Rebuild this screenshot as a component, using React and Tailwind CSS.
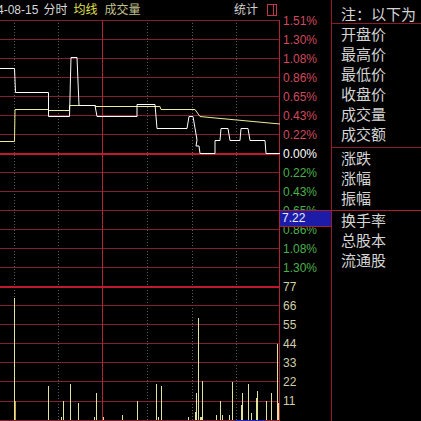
import React from "react";

// grid rows: 21 rows of 19.05px under a 20px header
const ROW = 19.05;
const gridY = Array.from({ length: 22 }, (_, k) => 20 + k * ROW);

const axisLabels = [
  { t: "1.51%", c: "text-[#d04a5c]" },
  { t: "1.30%", c: "text-[#d04a5c]" },
  { t: "1.08%", c: "text-[#d04a5c]" },
  { t: "0.86%", c: "text-[#d04a5c]" },
  { t: "0.65%", c: "text-[#d04a5c]" },
  { t: "0.43%", c: "text-[#d04a5c]" },
  { t: "0.22%", c: "text-[#d04a5c]" },
  { t: "0.00%", c: "text-white" },
  { t: "0.22%", c: "text-[#4cb04c]" },
  { t: "0.43%", c: "text-[#4cb04c]" },
  { t: "0.65%", c: "text-[#4cb04c]" },
  { t: "0.86%", c: "text-[#4cb04c]" },
  { t: "1.08%", c: "text-[#4cb04c]" },
  { t: "1.30%", c: "text-[#4cb04c]" },
  { t: "77", c: "text-[#cfcfa8]" },
  { t: "66", c: "text-[#cfcfa8]" },
  { t: "55", c: "text-[#cfcfa8]" },
  { t: "44", c: "text-[#cfcfa8]" },
  { t: "33", c: "text-[#cfcfa8]" },
  { t: "22", c: "text-[#cfcfa8]" },
  { t: "11", c: "text-[#cfcfa8]" },
];

// [x, top]
const bars = [
  [14, 298], [15, 401], [48, 386], [61, 417], [63, 401], [70, 384], [78, 403],
  [94, 417], [96, 393], [103, 417], [122, 415], [137, 401], [156, 384],
  [158, 417], [161, 386], [188, 417], [195, 412], [196, 393], [198, 318],
  [200, 417], [201, 417], [202, 381], [216, 415], [220, 401], [222, 415],
  [229, 415], [232, 382], [241, 405], [242, 393], [248, 384], [251, 413],
  [256, 398], [257, 391], [266, 401], [271, 393], [277, 344], [278, 403],
];

const pricePts =
  "0,68.5 14.5,68.5 15.5,92.5 48.5,92.5 48.5,116.5 69.5,116.5 71,57.5 77,57.5 79,105.5 95,105.5 97,116.5 137,116.5 137,104.5 155,104.5 157,128.5 187,128.5 189,116.5 193,116.5 197,140 196,146 199,146 200,153.5 215,153.5 215,140.5 220,140.5 221,128.5 228,128.5 230,140.5 240,140.5 241,128.5 248,128.5 250,140.5 265,140.5 266,153.5 280,153.5";

const avgPts =
  "0,141.5 14.5,141.5 15,109.5 48.5,109.5 48.5,110.5 69.5,110.5 69.5,105.5 95.5,105.5 95.5,106.5 160,106.5 161,109.5 195,109.5 200,116.5 210,117.5 280,124";

const Chart = () => (
  <svg width="280" height="401" viewBox="0 20 280 401" className="block">
    {[14, 58, 147, 192, 236].map((x) => (
      <line key={x} x1={x + 0.5} x2={x + 0.5} y1={20} y2={421} stroke="#5c5c5c" strokeDasharray="1 2" />
    ))}
    {gridY.map((y, k) =>
      k === 7 || k === 14 ? (
        <line key={k} x1={0} x2={280} y1={Math.floor(y) + 1} y2={Math.floor(y) + 1} stroke="#c0182c" strokeWidth={2} shapeRendering="crispEdges" />
      ) : (
        <line key={k} x1={0} x2={280} y1={Math.floor(y) + 0.5} y2={Math.floor(y) + 0.5} stroke="#84202e" shapeRendering="crispEdges" />
      )
    )}
    <line x1={102.5} x2={102.5} y1={20} y2={421} stroke="#b02434" shapeRendering="crispEdges" />
    <line x1={279.5} x2={279.5} y1={20} y2={421} stroke="#b02434" shapeRendering="crispEdges" />
    {bars.map(([x, top], i) => (
      <line key={i} x1={x + 0.5} x2={x + 0.5} y1={420} y2={top} stroke={i === 1 ? "#c8a448" : "#e2e29a"} shapeRendering="crispEdges" />
    ))}
    <rect x={235} y={420} width={30} height={1} fill="#2424c0" />
    <polyline points={avgPts} fill="none" stroke="#ecec98" strokeWidth={1} />
    <polyline points={pricePts} fill="none" stroke="#ffffff" strokeWidth={1} />
  </svg>
);

const PanelRow = ({ children }) => (
  <div className="h-[20px] leading-[20px] pl-[9px] whitespace-nowrap">{children}</div>
);

export default function App() {
  return (
    <div className="w-[421px] h-[421px] bg-black overflow-hidden flex font-['Liberation_Sans','Noto_Sans_CJK_SC',sans-serif]">
      {/* chart column */}
      <div className="w-[280px] flex flex-col shrink-0">
        <div className="h-[20px] flex items-center text-[12px] whitespace-nowrap overflow-hidden">
          <span className="ml-[-3px] text-[#d8d8d8]">4-08-15</span>
          <span className="ml-[5px] text-[#d8d8d8]">分时</span>
          <span className="ml-[6px] text-[#e0e050]">均线</span>
          <span className="ml-[7px] text-[#c2c28e]">成交量</span>
          <span className="ml-auto text-[#d0d0d0]">统计</span>
          <svg width="10" height="12" viewBox="0 0 10 12" className="ml-[9px] mr-[3px]">
            <rect x="0.5" y="0.5" width="9" height="11" fill="none" stroke="#c03848" />
            <line x1="6.5" x2="6.5" y1="0.5" y2="11.5" stroke="#c03848" />
          </svg>
        </div>
        <Chart />
      </div>

      {/* axis labels */}
      <div className="relative w-[51px] shrink-0 pt-[11.5px] flex flex-col text-[12px]">
        {axisLabels.map((l, i) => (
          <div key={i} className={`h-[19.05px] leading-[19.05px] pl-[3px] ${l.c}`}>
            {l.t}
          </div>
        ))}
        <div className="absolute left-0 top-[210px] w-full h-[17px] border-y border-[#a8202e] bg-[#1c1ca8] pl-[2px] leading-[15px] text-[#eaeaff]">
          7.22
        </div>
      </div>

      {/* info panel */}
      <div className="flex-1 border-l border-[#9a1c2c] flex flex-col text-[15px] text-[#d4d4d4]">
        <div className="h-[24px] border-b border-[#8a1c2a] pl-[9px] pt-[7px] leading-[16px] whitespace-nowrap overflow-hidden">
          注：以下为
        </div>
        <div className="pt-[1px] pb-[2px] border-b border-[#8a1c2a]">
          <PanelRow>开盘价</PanelRow>
          <PanelRow>最高价</PanelRow>
          <PanelRow>最低价</PanelRow>
          <PanelRow>收盘价</PanelRow>
          <PanelRow>成交量</PanelRow>
          <PanelRow>成交额</PanelRow>
        </div>
        <div className="pt-[1px] pb-[1px] border-b border-[#a8202e]">
          <PanelRow>涨跌</PanelRow>
          <PanelRow>涨幅</PanelRow>
          <PanelRow>振幅</PanelRow>
        </div>
        <div>
          <PanelRow>换手率</PanelRow>
          <PanelRow>总股本</PanelRow>
          <PanelRow>流通股</PanelRow>
        </div>
      </div>
    </div>
  );
}
